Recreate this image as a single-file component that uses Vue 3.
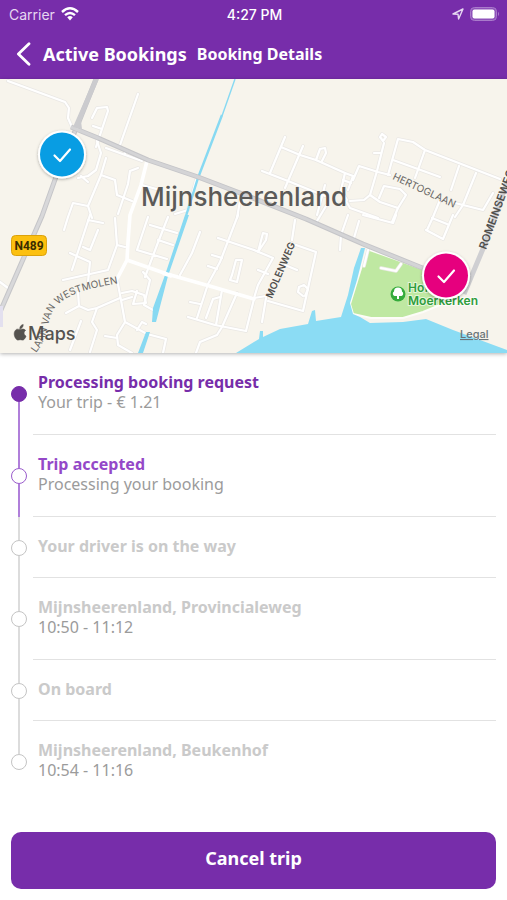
<template>
  <div class="app-container">
    <header class="header">
      <div class="status-bar">
        <div class="status-left">
          <span>Carrier</span>
          <svg width="18" height="14" viewBox="0 0 18 14" fill="none" stroke="#fff" stroke-width="2.4">
            <path d="M1 5 Q9 -2.4 17 5" />
            <path d="M4 8.2 Q9 3.8 14 8.2" />
            <path d="M6.2 10.2 Q9 8 11.8 10.2 L9 13.4 Z" fill="#fff" stroke="none" />
          </svg>
        </div>
        <span class="time">4:27 PM</span>
        <div class="status-right">
          <svg width="12" height="12" viewBox="0 0 12 12" fill="none" stroke="#e6d7f1" stroke-width="1.4" stroke-linejoin="round">
            <path d="M1 6 L11 1 L6.6 11 L6 6.2 Z" />
          </svg>
          <svg width="30" height="14" viewBox="0 0 30 14">
            <rect x="0.5" y="0.5" width="26" height="13" rx="4" fill="#8f52ba" stroke="#a97bcb" />
            <rect x="2.5" y="2.5" width="22" height="9" rx="2" fill="#fff" />
            <path d="M28 4.8 Q30 7 28 9.2 Z" fill="#a97bcb" />
          </svg>
        </div>
      </div>
      <nav class="nav-bar">
        <button class="back" type="button">
          <svg width="16" height="24" viewBox="0 0 16 24" fill="none" stroke="#fff" stroke-width="2.8" stroke-linecap="round" stroke-linejoin="round">
            <path d="M13 1.8 L2.4 12 L13 22.2" />
          </svg>
          <span>Active Bookings</span>
        </button>
        <h1>Booking Details</h1>
      </nav>
    </header>

    <!-- map -->
    <div class="map">
      <svg viewBox="0 79 507 274">
        <defs>
          <path id="westmolen" d="M36 353 C50 336 46 316 57 306 C68 293 90 288 126 282" />
          <filter id="shadow" x="-30%" y="-30%" width="160%" height="160%">
            <feDropShadow dx="0" dy="1" stdDeviation="1.5" flood-opacity="0.3" />
          </filter>
        </defs>
        <rect y="79" width="507" height="274" fill="#f7f4ec" />

        <path fill="#bfe8a2" stroke="#fdfcf8" stroke-width="2" d="M367 249 L420 268 L472 280 L458 296 L440 305 L423 312 L403 318 L371 318 L353 314 L350 304 Z" />
        <path fill="#f7f4ec" d="M446 262 L480 262 L480 296 L440 306 Z" />
        <path fill="#8bdcf4" d="M236 353 L259 339 L260 331 L263 331 L263 337 L280 329 L308 324 L312 311 L315 310 L316 321 L341 317 L348 295 L354 268 L361 248 L365 248 L357 280 L350 303 L353 314 L360 317 L370 323 L403 322 L426 319 L453 330 L507 350 L507 353 Z" />

        <g fill="none" stroke-linejoin="round" stroke-linecap="round">
          <path v-for="(d, i) in streets" :key="'case' + i" :d="d" stroke="#eae8e5" stroke-width="3.6" />
          <path v-for="(d, i) in streets" :key="'fill' + i" :d="d" stroke="#fff" stroke-width="2.2" />
          <path d="M147 161 L141 185 L130 215 L128 242 L127 260 L117 279 M127 260 L167 274 L213 287 L254 299" stroke="#fff" stroke-width="3.6" />
        </g>

        <path d="M235 79 L222 116" stroke="#87d9f2" stroke-width="1.4" />
        <path d="M222 115 L198 178 L186 216" fill="none" stroke="#87d9f2" stroke-width="2.4" />
        <path fill="#87d9f2" d="M185 215 L189 215 L168 276 L156 322 L152 322 L153 308 L165 275 Z M146 332 L150 332 L143 353 L138 353 Z" />
        <path d="M163 273 L172 276" stroke="#fff" stroke-width="4" />

        <g fill="none" stroke-linejoin="round">
          <path d="M96 79 L76 129 L62 160 L42 216 L14 280 L0 312" stroke="#c5c5c8" stroke-width="5" />
          <path d="M96 79 L76 129 L62 160 L42 216 L14 280 L0 312" stroke="#d8d8da" stroke-width="3" />
          <path d="M71 127 L98 138 L148 160 L198 177 L240 193 L306 219 L363 244 L420 267 L446 277" stroke="#c5c5c8" stroke-width="5" />
          <path d="M71 127 L98 138 L148 160 L198 177 L240 193 L306 219 L363 244 L420 267 L446 277" stroke="#d4d4d6" stroke-width="3" />
          <path d="M464 294 L472 275 L485 244 L507 182" stroke="#cfcfd2" stroke-width="5" />
          <path d="M0 306 V327" stroke="#e3e0ef" stroke-width="6" />
        </g>
        <path d="M94 79 L99 79 L81 121 L82 129 L73 127 Z" fill="#cbcbce" />

        <rect x="11.5" y="235.500" width="35" height="20" rx="4" fill="#fcc010" stroke="#dba20c" />
        <text x="29" y="250" class="shield">N489</text>
        <text x="244" y="206" class="city">Mijnsheerenland</text>
        <text class="road"><textPath href="#westmolen">LAAN VAN WESTMOLEN</textPath></text>
        <text class="road" transform="translate(392 179) rotate(25)">HERTOGLAAN</text>
        <text class="road strong" transform="translate(272 299) rotate(-67)">MOLENWEG</text>
        <text class="road strong wide" transform="translate(486 250) rotate(-70)">ROMEINSEWEG</text>

        <circle cx="398" cy="294" r="7.500" fill="#35ab3c" />
        <path d="M397 299 V296 H394.500 A2.500 2.500 0 0 1 394 291.500 A4 4 0 0 1 402 291.500 A2.500 2.500 0 0 1 401.500 296 H399 V299 Z" fill="#fff" />
        <text x="408" y="292" class="park">Hof van</text>
        <text x="408" y="305" class="park">Moerkerken</text>

        <g filter="url(#shadow)">
          <circle cx="62" cy="154.500" r="24" fill="#fff" />
          <circle cx="446" cy="275.500" r="24" fill="#fff" />
        </g>
        <circle cx="62" cy="154.500" r="22" fill="#089de3" />
        <circle cx="446" cy="275.500" r="22" fill="#e6007e" />
        <g fill="none" stroke="#fff" stroke-width="2.2" stroke-linecap="round" stroke-linejoin="round">
          <path d="M54.500 155.500 L60 161 L70 149.500" />
          <path d="M438.500 276.500 L444 282 L454 270.500" />
        </g>

        <g fill="#55534f">
          <path d="M20 329.500 C18 329.300 17 328.500 15.500 330.200 C13.500 332.500 14 336 15.800 338.600 C17.500 341 18.500 339.800 20.200 339.700 C22 339.700 22.800 341 24.500 338.900 C25.500 337.700 26 336.400 26 336 C23.500 334.800 23.500 331.500 25.600 330.400 C23.800 328.300 22 329.200 20 329.500 Z M19.800 328.800 C19.600 326.500 21.500 324.600 23.200 324.500 C23.400 326.800 21.600 328.700 19.800 328.800 Z" stroke="#55534f" stroke-width="0.6" />
          <text x="28" y="340" class="maps">Maps</text>
        </g>
        <a href="#legal"><text x="460" y="338" class="legal">Legal</text></a>
      </svg>
    </div>

    <!-- trip progress -->
    <ol class="timeline">
      <li v-for="(step, index) in steps" :key="index" :class="['step', step.state]">
        <div class="rail">
          <span class="line" :class="{ hidden: index === 0 }"></span>
          <span class="dot"></span>
          <span class="line" :class="{ hidden: index === steps.length - 1 }"></span>
        </div>
        <div class="step-body">
          <h2>{{ step.title }}</h2>
          <p v-if="step.detail">{{ step.detail }}</p>
        </div>
      </li>
    </ol>

    <div class="footer">
      <button class="cancel" type="button">Cancel trip</button>
    </div>
  </div>
</template>

<script setup>
import { ref } from 'vue';

const steps = ref([
  { title: 'Processing booking request', detail: 'Your trip - € 1.21', state: 'done' },
  { title: 'Trip accepted', detail: 'Processing your booking', state: 'current' },
  { title: 'Your driver is on the way', detail: '', state: 'pending' },
  { title: 'Mijnsheerenland, Provincialeweg', detail: '10:50 - 11:12', state: 'pending' },
  { title: 'On board', detail: '', state: 'pending' },
  { title: 'Mijnsheerenland, Beukenhof', detail: '10:54 - 11:16', state: 'pending' }
]);

const streets = [
  // west side
  'M8 81 L65 102 L69 108 L68 118 L72 127',
  'M92 118 L97 108 L107 107 L108 111 L100 135 L96 147 M93 126 L102 129',
  'M138 94 L120 145 M106 148 L142 161 M125 150 V155',
  'M97 141 L101 153 L96 170 L88 176 L78 178 M81 176 L88 182',
  'M106 158 L101 175 L88 206 L92 218 M101 175 L115 180 L117 195 L132 201',
  'M138 168 L130 171 L128 184 L118 214',
  'M88 206 L73 203 L68 217 L64 230 M142 185 L160 190',
  'M196 180 L188 210 L175 214 M240 201 L237 218',
  'M90 215 L72 270 M88 220 L103 223 M98 230 L90 250 L83 247 M70 253 L90 262 L88 282',
  'M115 218 L117 245 L108 270 L63 280 M117 245 L125 247',
  'M117 279 L121 300 L125 322 L147 334 L166 339 L163 353',
  'M125 322 L117 335 L118 345 L132 353 M105 336 L117 338',
  'M120 298 L97 308 L92 322 L97 330 L90 352 M78 292 L79 306 L66 313 M79 306 L88 310 L97 308',
  'M81 321 L70 350 M122 293 L132 291 L144 295 L146 303 L133 304 L137 291 M122 300 L132 297',
  'M143 272 L150 280 L144 305 L153 310 M137 330 L142 322 L146 324',
  'M148 217 L137 250 L167 259 M150 225 L177 233 M158 240 L173 245 M168 217 L157 245 L145 277',
  'M200 232 L192 253 L180 275 M238 215 L220 262 L208 284 M218 238 L254 250',
  'M208 266 L217 269 M212 255 L222 258 M232 275 L236 260 L242 260 L237 282 L230 280 Z',
  'M207 287 L197 318 M188 317 L215 325 L246 331 M190 302 L200 304 M213 299 L220 297 M213 299 L206 318',
  'M237 293 L222 327 L217 335 L200 342 L196 353 M254 299 L250 315 L246 331 M222 290 L216 325',
  'M0 282 L8 288',
  // north side
  'M285 137 L270 173 M262 171 L288 181 L325 196 M281 147 L300 155 L316 160 L345 173 L353 176',
  'M303 146 L285 188 M316 160 L320 149 L325 148 L326 153 L322 161',
  'M345 173 L341 190 L347 200 M353 176 L348 190 M343 180 L351 183 M353 180 L359 166 L378 172 L390 175',
  'M384 143 L377 171 L370 195 L364 200 L350 201 M374 153 L380 153 M382 134 L386 137 L383 141 L380 137 Z',
  'M388 175 L398 139 L413 142 L425 150 L500 179 M393 160 L440 177 M425 150 L415 178',
  'M459 166 L451 190 M476 173 L463 205 L455 217 M455 203 L483 210 L493 193',
  'M370 195 L380 202 L398 208 L406 195 L400 189 L384 186 L379 198 M398 208 L392 222',
  'M346 201 L350 208 L378 218 M440 200 L433 217 L427 230 M325 185 L317 215',
  'M348 215 L341 235 L340 250 M359 221 L354 238 M363 215 L393 223 L396 215 M326 206 L317 221',
  'M453 215 L443 239 L426 230 M432 218 L447 224',
  // south side
  'M295 220 L292 240 M266 298 L262 322 M296 245 L316 252 L303 311 L268 301',
  'M303 296 L298 292 L299 287 L304 285 L308 289 L305 296 M254 298 L266 296',
  'M254 250 L273 258 L258 285 L254 298 M258 252 L263 233 L267 234 L266 240 L258 252 M258 270 L268 274 M285 265 L297 270',
  'M368 250 L364 266 M401 264 L396 271 L381 268'
];
</script>

<style>
body {
  margin: 0;
  background: #fff;
}
</style>

<style scoped>
.app-container {
  display: flex;
  flex-direction: column;
  min-height: 100vh;
  font-family: "Noto Sans", sans-serif;
}

.header {
  background: #772daa;
  color: #fff;
}

.status-bar {
  display: flex;
  align-items: center;
  height: 28px;
  padding: 0 7px 0 9px;
  font-family: Inter, sans-serif;
  font-size: 14px;
}

.status-left,
.status-right {
  display: flex;
  flex: 1;
  align-items: center;
  gap: 6px;
  color: #e6d7f1;
}

.status-right {
  justify-content: flex-end;
}

.time {
  font-weight: 500;
}

.nav-bar {
  display: flex;
  align-items: center;
  gap: 10px;
  height: 51px;
  padding: 0 16px;
}

.back {
  display: flex;
  align-items: center;
  gap: 11px;
  padding: 0;
  border: 0;
  background: none;
  color: #fff;
  font: inherit;
  font-size: 18px;
  font-weight: 700;
  cursor: pointer;
}

.nav-bar h1 {
  margin: 0;
  font-size: 16px;
  font-weight: 700;
}

.map {
  box-shadow: 0 1px 4px rgba(0, 0, 0, 0.3);
}

.map svg {
  display: block;
  width: 100%;
  height: auto;
}

.map text {
  font-family: Inter, sans-serif;
}

.map .city {
  font-size: 26px;
  font-weight: 500;
  text-anchor: middle;
  fill: #5b5a58;
}

.map .shield {
  font-family: Roboto, sans-serif;
  font-size: 12px;
  font-weight: 700;
  text-anchor: middle;
  fill: #3a2c00;
}

.map .road {
  font-size: 10px;
  fill: #6a6966;
}

.map .strong {
  font-weight: 600;
  fill: #504f4d;
}

.map .wide {
  font-size: 11px;
}

.map .park {
  font-size: 12px;
  font-weight: 600;
  fill: #2f9d3c;
  stroke: #fff;
  stroke-width: 2px;
  stroke-opacity: 0.6;
  paint-order: stroke;
}

.map .maps {
  font-size: 18px;
  font-weight: 500;
}

.map .legal {
  font-size: 11px;
  font-weight: 500;
  text-decoration: underline;
  fill: #6b7478;
}

.timeline {
  margin: 0;
  padding: 0 11px;
  list-style: none;
}

.step {
  display: flex;
  gap: 6px;
}

.rail {
  display: flex;
  flex-direction: column;
  align-items: center;
  width: 16px;
}

.line {
  flex: 1;
  width: 2px;
  background: #dcdcdc;
}

.line.hidden {
  visibility: hidden;
}

.dot {
  box-sizing: border-box;
  width: 16px;
  height: 16px;
  border: 1px solid #c4c4c4;
  border-radius: 50%;
}

.step-body {
  flex: 1;
  padding: 19px 5px 21px;
  border-bottom: 1px solid #e2e2e2;
}

.step:last-child .step-body {
  border-bottom-color: transparent;
}

.step h2 {
  margin: 0;
  font-size: 16px;
  line-height: 20px;
  font-weight: 700;
  color: #cacaca;
}

.step p {
  margin: 0;
  font-size: 16px;
  line-height: 21px;
  color: #9b9b9b;
}

.step.done h2 {
  color: #772daa;
}

.step.current h2 {
  color: #9448c8;
}

.done .line,
.current .line {
  background: #b07fda;
}

.done .dot {
  border-color: #772daa;
  background: #772daa;
}

.current .dot {
  border-color: #9a5bcc;
}

.footer {
  padding: 29px 11px 11px;
}

.cancel {
  width: 100%;
  height: 57px;
  padding: 0 0 5px;
  border: 0;
  border-radius: 10px;
  background: #772daa;
  color: #fff;
  font: inherit;
  font-size: 18px;
  font-weight: 700;
  cursor: pointer;
}
</style>
